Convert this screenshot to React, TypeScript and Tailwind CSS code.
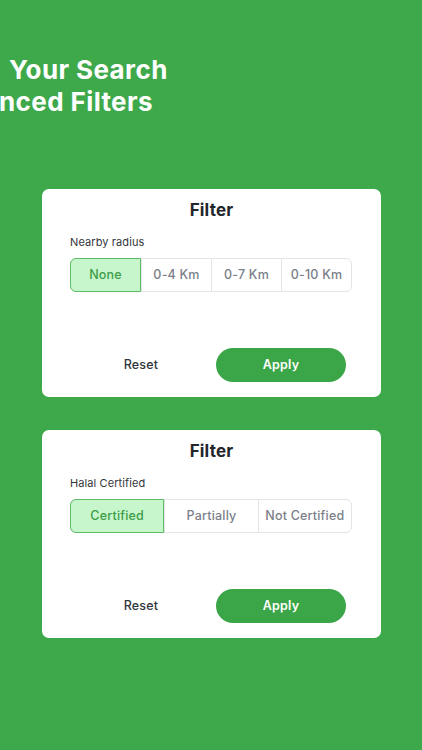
import React, { useState } from 'react';

interface FilterCardProps {
  label: string;
  options: string[];
}

const FilterCard = ({ label, options }: FilterCardProps) => {
  const [selected, setSelected] = useState(0);

  return (
    <div className="mx-[42px] w-[339px] rounded-[7px] bg-white px-[28px] pt-[10px] pb-[15px]">
      <h2 className="text-center text-[17px] leading-[22px] font-bold tracking-[0.2px] text-[#23262b]">Filter</h2>
      <p className="mt-[13px] text-[11px] leading-[16px] tracking-[0.1px] text-[#33363b]">{label}</p>

      {/* Segmented options */}
      <div className="mt-2 flex h-[34px] w-[282px] rounded-[6px] border border-[#e2e4e7]">
        {options.map((opt, i) => (
          <button
            key={opt}
            onClick={() => setSelected(i)}
            className={
              i === selected
                ? 'relative z-10 -my-px -ml-px flex flex-1 items-center justify-center rounded-l-[6px] border border-[#5dbb66] bg-[#c8f6cc] text-[12.5px] font-medium tracking-[0.2px] text-[#3b9d48]'
                : 'flex flex-1 items-center justify-center border-l border-[#e2e4e7] text-[12.5px] font-medium tracking-[0.2px] text-[#7b8089]'
            }
          >
            {opt}
          </button>
        ))}
      </div>

      {/* Actions */}
      <div className="mt-[56px] flex items-center">
        <button className="w-[142px] text-center text-[12.5px] font-medium tracking-[0.2px] text-[#33363b]">Reset</button>
        <button className="ml-[4px] h-[34px] w-[130px] rounded-full bg-[#3ba647] text-[12.5px] font-semibold tracking-[0.2px] text-white">
          Apply
        </button>
      </div>
    </div>
  );
};

export default function App() {
  return (
    <div className="h-[750px] w-[422px] overflow-hidden bg-[#3ea94b]" style={{ fontFamily: 'Inter, "Noto Sans", sans-serif' }}>
      {/* Heading */}
      <div className="pt-[54px] text-[26px] leading-[32px] font-bold tracking-[0.4px] text-white">
        <div className="pl-[9px] whitespace-nowrap">Your Search</div>
        <div className="-ml-[1px] whitespace-nowrap">nced Filters</div>
      </div>

      <div className="mt-[71px] flex flex-col gap-[33px]">
        <FilterCard label="Nearby radius" options={['None', '0-4 Km', '0-7 Km', '0-10 Km']} />
        <FilterCard label="Halal Certified" options={['Certified', 'Partially', 'Not Certified']} />
      </div>
    </div>
  );
}
